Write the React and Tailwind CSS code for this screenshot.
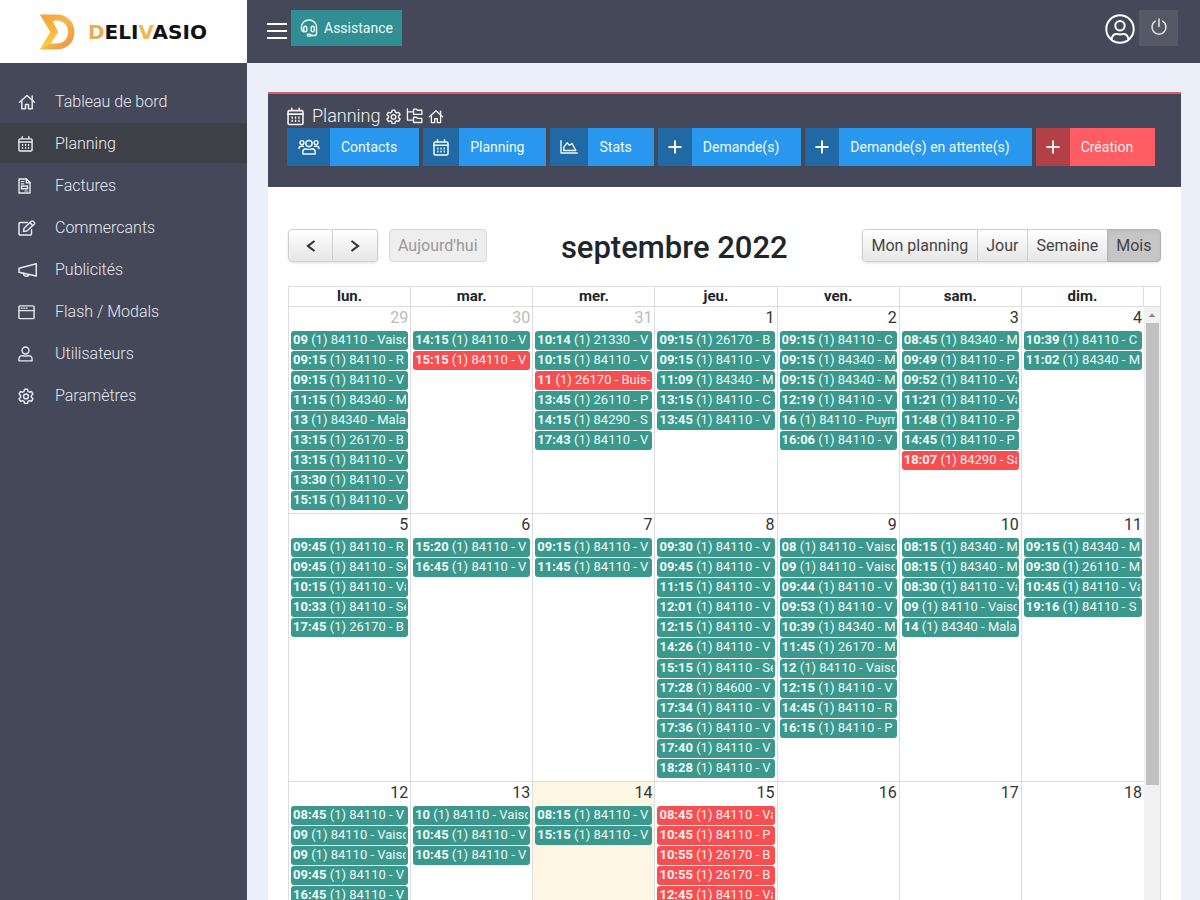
import React from "react";

function Icon({ box, className, width = 1.5, children }) {
  return (
    <svg
      viewBox={box}
      className={className}
      fill="none"
      stroke="currentColor"
      strokeWidth={width}
      strokeLinecap="round"
      strokeLinejoin="round"
      aria-hidden="true"
    >
      {children}
    </svg>
  );
}

const HomeIcon = ({ className }) => (
  <Icon box="0 0 18 16" className={className}>
    <path d="M1.500 8.300L9 1.500L16.500 8.300" />
    <path d="M3.800 7v7.800h3.700v-4.300h3v4.300h3.700V7" />
    <path d="M14.200 2v3.500" />
  </Icon>
);

const CalendarIcon = ({ className }) => (
  <Icon box="0 0 16 17" className={className}>
    <rect x="1" y="3" width="14" height="13" rx="1.200" />
    <path d="M1 6.300h14" />
    <path d="M4.500 0.800v2M11.500 0.800v2" />
    <path d="M4.200 9.500h1.300M7.400 9.500h1.300M10.600 9.500h1.300M4.200 12.600h1.300M7.400 12.600h1.300M10.600 12.600h1.300" strokeWidth="2" strokeLinecap="butt" />
  </Icon>
);

const InvoiceIcon = ({ className }) => (
  <Icon box="0 0 13 16" className={className} width={1.4}>
    <path d="M1 1h7.500L12 4.500V15H1z" />
    <path d="M8.300 1v3.700H12" />
    <path d="M3.200 3.500h2.600M3.200 5.800h2.600" strokeWidth="1.200" />
    <rect x="3.500" y="8" width="6" height="2.800" />
    <path d="M7 13h2.500" strokeWidth="1.200" />
  </Icon>
);

const EditIcon = ({ className }) => (
  <Icon box="0 0 18 16" className={className}>
    <path d="M9.500 2.500H2.200A1.200 1.200 0 0 0 1 3.700v10.100A1.200 1.200 0 0 0 2.200 15h10.100a1.200 1.200 0 0 0 1.200-1.200V9.800" />
    <path d="M5.500 11.500l0.500-3.200L13.300 1.300a1.300 1.300 0 0 1 1.900 0l1 1a1.300 1.300 0 0 1 0 1.900L8.800 11z" />
    <path d="M12 2.800L14.700 5.500" />
  </Icon>
);

const BullhornIcon = ({ className }) => (
  <Icon box="0 0 20 16" className={className}>
    <path d="M1 6.200v4L18.300 14V1.800z" />
    <path d="M5.500 11.300c0 3.600 5 3.600 5.500 1.200" />
  </Icon>
);

const WindowIcon = ({ className }) => (
  <Icon box="0 0 18 16" className={className}>
    <rect x="1" y="1.500" width="16" height="13.500" rx="1" />
    <path d="M1 6.500h16" />
    <path d="M3.300 4h1M6 4h1M8.700 4h1" strokeWidth="1.300" />
  </Icon>
);

const UserIcon = ({ className }) => (
  <Icon box="0 0 16 17" className={className}>
    <circle cx="8" cy="4.800" r="3.700" />
    <path d="M1 15.800v-1.600c0-2.400 1.700-4 4-4c1.800 0.700 4.200 0.700 6 0c2.300 0 4 1.600 4 4v1.600z" />
  </Icon>
);

const CogIcon = ({ className }) => (
  <Icon box="0 0 24 24" className={className} width={2.2}>
    <path d="M9.800 1.800h4.400l0.700 3.200l2.300 1.300l3.100-1l2.200 3.800l-2.400 2.200v2.600l2.400 2.200l-2.200 3.800l-3.100-1l-2.300 1.300l-0.700 3.200H9.800l-0.700-3.200l-2.300-1.300l-3.100 1l-2.200-3.800l2.400-2.200v-2.600L1.500 9.100l2.200-3.800l3.100 1l2.300-1.300z" />
    <circle cx="12" cy="12.600" r="3.600" />
  </Icon>
);

const FolderTreeIcon = ({ className }) => (
  <Icon box="0 0 18 17" className={className} width={1.4}>
    <path d="M1.500 0.800v12h6M1.500 4.200h6" />
    <path d="M8 1.200h3l1 1.200h4.800v4.400H8zM8 9.800h3l1 1.200h4.800v4.400H8z" />
  </Icon>
);

const UsersIcon = ({ className }) => (
  <Icon box="0 0 22 16" className={className} width={1.4}>
    <circle cx="4" cy="3.600" r="2" />
    <circle cx="18" cy="3.600" r="2" />
    <circle cx="11" cy="4.600" r="3.100" />
    <path d="M4.800 15v-2c0-2 1.500-3.200 3.400-3.200c1.600 0.700 4 0.700 5.600 0c1.900 0 3.400 1.200 3.400 3.200v2z" />
    <path d="M1 9.500c0-1.400 1-2.200 2.300-2.200h2.200M21 9.500c0-1.400-1-2.200-2.300-2.200h-2.200" />
  </Icon>
);

const ChartIcon = ({ className }) => (
  <Icon box="0 0 18 14" className={className} width={1.4}>
    <path d="M1 0.800V13h16.200" />
    <path d="M3.700 10.500V7.300l3.300-4.500l2.500 2.500l2.500-1.800l3.800 7z" />
  </Icon>
);

const PlusIcon = ({ className }) => (
  <Icon box="0 0 14 14" className={className} width={2}>
    <path d="M7 1.200v11.600M1.200 7h11.600" />
  </Icon>
);

const HeadsetIcon = ({ className }) => (
  <Icon box="0 0 18 18" className={className} width={1.4}>
    <path d="M1.500 9.500V8.200a7.500 7.200 0 0 1 15 0v6.300a2 2 0 0 1-2 2h-4" />
    <rect x="3.800" y="7.300" width="3" height="5.500" rx="1.400" />
    <rect x="11.200" y="7.300" width="3" height="5.500" rx="1.400" />
    <path d="M1.500 9.500c0 1.500 0.800 3 2.300 3.300" />
    <rect x="7.300" y="15.200" width="3.500" height="1.900" rx="0.900" />
  </Icon>
);

const UserCircleIcon = ({ className }) => (
  <Icon box="0 0 30 30" className={className} width={2}>
    <circle cx="15" cy="15" r="13.700" />
    <circle cx="15" cy="11.800" r="4.700" />
    <path d="M6.500 25.200c0.500-3.500 3-5.700 5.700-5.200c1.900 0.600 3.700 0.600 5.600 0c2.700-0.500 5.200 1.700 5.700 5.200" />
  </Icon>
);

const PowerIcon = ({ className }) => (
  <Icon box="0 0 18 18" className={className} width={1.5}>
    <path d="M5.300 3.200a7 7 0 1 0 7.400 0" />
    <path d="M9 1v7.500" />
  </Icon>
);

const NAV = [
  ["Tableau de bord", HomeIcon, "h-4 w-[18px]"],
  ["Planning", CalendarIcon, "h-4 w-[15px]", true],
  ["Factures", InvoiceIcon, "h-4 w-[13px]"],
  ["Commercants", EditIcon, "h-4 w-[18px]"],
  ["Publicités", BullhornIcon, "h-4 w-5"],
  ["Flash / Modals", WindowIcon, "h-4 w-[17px]"],
  ["Utilisateurs", UserIcon, "h-4 w-[15px]"],
  ["Paramètres", CogIcon, "size-4"],
];

const ACTIONS = [
  ["Contacts", UsersIcon, "w-[43px]", "h-4 w-[22px]"],
  ["Planning", CalendarIcon, "w-9", "h-[17px] w-4"],
  ["Stats", ChartIcon, "w-[38px]", "h-3.5 w-[18px]"],
  ["Demande(s)", PlusIcon, "w-[34px]", "size-3.5"],
  ["Demande(s) en attente(s)", PlusIcon, "w-[34px]", "size-3.5"],
];

const VAI = "84110 - Vaiso";
const VA = "84110 - Va";
const V = "84110 - V";
const M = "84340 - M";
const MALA = "84340 - Mala";
const R = "84110 - R";
const S = "84110 - S";
const SE = "84110 - Sé";
const B = "26170 - B";
const P = "84110 - P";
const C = "84110 - C";

const WEEKS = [
  {
    size: "h-[207px]",
    rows: "grid-rows-[repeat(9,minmax(0,1fr))]",
    days: [
      { n: 29, out: true, ev: [["09", VAI], ["09:15", R], ["09:15", V], ["11:15", M], ["13", MALA], ["13:15", B], ["13:15", V], ["13:30", V], ["15:15", V]] },
      { n: 30, out: true, ev: [["14:15", V], ["15:15", V, 1]] },
      { n: 31, out: true, ev: [["10:14", "21330 - V"], ["10:15", V], ["11", "26170 - Buis-", 1], ["13:45", "26110 - P"], ["14:15", "84290 - S"], ["17:43", V]] },
      { n: 1, ev: [["09:15", B], ["09:15", V], ["11:09", M], ["13:15", C], ["13:45", V]] },
      { n: 2, ev: [["09:15", C], ["09:15", M], ["09:15", M], ["12:19", V], ["16", "84110 - Puym"], ["16:06", V]] },
      { n: 3, ev: [["08:45", M], ["09:49", P], ["09:52", VA], ["11:21", VA], ["11:48", P], ["14:45", P], ["18:07", "84290 - Sa", 1]] },
      { n: 4, ev: [["10:39", C], ["11:02", M]] },
    ],
  },
  {
    size: "h-[268px]",
    rows: "grid-rows-[repeat(12,minmax(0,1fr))]",
    days: [
      { n: 5, ev: [["09:45", R], ["09:45", SE], ["10:15", VA], ["10:33", SE], ["17:45", B]] },
      { n: 6, ev: [["15:20", V], ["16:45", V]] },
      { n: 7, ev: [["09:15", V], ["11:45", V]] },
      { n: 8, ev: [["09:30", V], ["09:45", V], ["11:15", V], ["12:01", V], ["12:15", V], ["14:26", V], ["15:15", SE], ["17:28", "84600 - V"], ["17:34", V], ["17:36", V], ["17:40", V], ["18:28", V]] },
      { n: 9, ev: [["08", VAI], ["09", VAI], ["09:44", V], ["09:53", V], ["10:39", M], ["11:45", "26170 - M"], ["12", VAI], ["12:15", V], ["14:45", R], ["16:15", P]] },
      { n: 10, ev: [["08:15", M], ["08:15", M], ["08:30", VA], ["09", VAI], ["14", MALA]] },
      { n: 11, ev: [["09:15", M], ["09:30", "26110 - M"], ["10:45", VA], ["19:16", S]] },
    ],
  },
  {
    size: "h-[268px]",
    rows: "grid-rows-[repeat(12,minmax(0,1fr))]",
    days: [
      { n: 12, ev: [["08:45", V], ["09", VAI], ["09", VAI], ["09:45", V], ["16:45", V]] },
      { n: 13, ev: [["10", VAI], ["10:45", V], ["10:45", V]] },
      { n: 14, today: true, ev: [["08:15", V], ["15:15", V]] },
      { n: 15, ev: [["08:45", VA, 1], ["10:45", P, 1], ["10:55", B, 1], ["10:55", B, 1], ["12:45", VA, 1]] },
      { n: 16, ev: [] },
      { n: 17, ev: [] },
      { n: 18, ev: [] },
    ],
  },
];

function Logo() {
  return (
    <a href="#" className="flex h-[63px] items-center gap-3 bg-white pl-[38px]" aria-label="Delivasio">
      <svg viewBox="0 0 38 38" className="size-[38px]" aria-hidden="true">
        <defs>
          <linearGradient id="mark" x1="0" y1="0" x2="1" y2="1">
            <stop offset="0" stopColor="#f0a04b" />
            <stop offset="0.5" stopColor="#f6b84a" />
            <stop offset="1" stopColor="#ee8a45" />
          </linearGradient>
          <linearGradient id="inner" x1="0" y1="0" x2="0" y2="1">
            <stop offset="0" stopColor="#f3a23c" />
            <stop offset="1" stopColor="#fbd33f" />
          </linearGradient>
        </defs>
        <path d="M2 1.500H18C29.500 1.500 36.500 9 36.500 19S29.500 36.500 18 36.500H2L12.500 19ZM14.500 8L20 19L12.500 30.500H18C25.500 30.500 30 26 30 19S25.500 7.500 18 7.500Z" fill="url(#mark)" fillRule="evenodd" />
        <path d="M2 1.500L14.500 8L20 19L12.500 30.500L2 36.500L12.500 19Z" fill="url(#inner)" />
      </svg>
      <span className="font-['DejaVu_Sans',sans-serif] text-[20px] leading-none font-bold text-[#111]">
        <span className="text-[#e9ad55]">D</span>ELI<span className="text-[#efb75a]">V</span>ASIO
      </span>
    </a>
  );
}

function Sidebar() {
  return (
    <aside className="flex w-[247px] shrink-0 flex-col bg-[#444859]">
      <Logo />
      <nav className="flex flex-col gap-0.5 pt-[18px]">
        {NAV.map(([label, Glyph, size, active]) => (
          <a
            key={label}
            href="#"
            className={
              active
                ? "flex h-10 items-center bg-[#3d4047] pt-0.5 pl-[18px] text-base font-light text-[#eceef2]"
                : "flex h-10 items-center pt-0.5 pl-[18px] text-base font-light text-[#e6e8ee]"
            }
          >
            <span className="flex w-[37px]"><Glyph className={size} /></span>
            {label}
          </a>
        ))}
      </nav>
    </aside>
  );
}

function Topbar() {
  return (
    <header className="flex h-[63px] shrink-0 items-start bg-[#444859] pt-2.5 pr-[22px] pl-5">
      <button type="button" aria-label="Menu" className="mr-1 flex h-[42px] w-5 flex-col justify-center gap-[5px]">
        <span className="h-0.5 w-full bg-white" />
        <span className="h-0.5 w-full bg-white" />
        <span className="h-0.5 w-full bg-white" />
      </button>
      <button type="button" className="flex h-9 items-center gap-1.5 bg-[#318e93] px-[9px] text-sm text-[#eefcfc]">
        <HeadsetIcon className="size-[18px]" />
        Assistance
      </button>
      <div className="ml-auto flex items-start gap-1">
        <button type="button" aria-label="Profil" className="flex h-[38px] items-center text-white">
          <UserCircleIcon className="size-[30px]" />
        </button>
        <button type="button" aria-label="Déconnexion" className="flex h-9 w-[39px] items-center justify-center bg-[#565866] pb-0.5 text-[#e6e6ea]">
          <PowerIcon className="size-[18px]" />
        </button>
      </div>
    </header>
  );
}

function PanelHeader() {
  return (
    <div className="h-[95px] shrink-0 border-t-2 border-[#d4616d] bg-[#444859] px-[19px] pt-2.5">
      <h1 className="flex h-6 items-center gap-[5px] text-lg font-light text-[#f6f4f1]">
        <span className="flex items-center gap-2">
          <CalendarIcon className="h-[19px] w-[17px]" />
          Planning
        </span>
        <a href="#" aria-label="Réglages"><CogIcon className="size-[15px]" /></a>
        <a href="#" aria-label="Arborescence"><FolderTreeIcon className="h-4 w-[17px]" /></a>
        <a href="#" aria-label="Accueil"><HomeIcon className="h-[15px] w-4" /></a>
      </h1>
      <div className="flex gap-1 text-sm whitespace-nowrap">
        {ACTIONS.map(([label, Glyph, w, size]) => (
          <button key={label} type="button" className="flex h-[38px] items-stretch bg-[#2a97ef] text-[#f0faff]">
            <span className={`flex items-center justify-center bg-[#2069a5] ${w}`}><Glyph className={size} /></span>
            <span className="flex items-center pr-[22px] pl-[11px]">{label}</span>
          </button>
        ))}
        <button type="button" className="flex h-[38px] items-stretch bg-[#ff5c63] text-[#fff0ee]">
          <span className="flex w-[34px] items-center justify-center bg-[#b24147]"><PlusIcon className="size-3.5" /></span>
          <span className="flex items-center pr-[22px] pl-[11px]">Création</span>
        </button>
      </div>
    </div>
  );
}

function Toolbar() {
  const base = "flex h-[33px] items-center justify-center border-[#d0d0d0] bg-linear-to-b from-white to-[#e6e6e6] text-[#444]";
  return (
    <div className="flex h-9 shrink-0 items-start justify-between text-base">
      <div className="flex items-center gap-[11px]">
        <div className="flex rounded shadow-sm">
          <button type="button" aria-label="Précédent" className={`${base} w-[45px] rounded-l border`}>
            <svg viewBox="0 0 10 12" className="h-3 w-2.5" fill="none" stroke="#333" strokeWidth="2.2"><path d="M8.500 1L2 6l6.500 5" /></svg>
          </button>
          <button type="button" aria-label="Suivant" className={`${base} w-[45px] rounded-r border border-l-0`}>
            <svg viewBox="0 0 10 12" className="h-3 w-2.5" fill="none" stroke="#333" strokeWidth="2.2"><path d="M1.500 1L8 6l-6.500 5" /></svg>
          </button>
        </div>
        <button type="button" disabled className="h-[33px] rounded border border-[#d9d9d9] bg-[#eeeeee] px-2 text-[#999]">Aujourd'hui</button>
      </div>
      <h2 className="text-[31px] leading-[38px] font-medium text-[#212529]">septembre 2022</h2>
      <div className="flex w-[299px] rounded whitespace-nowrap shadow-sm">
        <button type="button" className={`${base} flex-auto rounded-l border`}>Mon planning</button>
        <button type="button" className={`${base} flex-auto border-y border-r`}>Jour</button>
        <button type="button" className={`${base} flex-auto border-y`}>Semaine</button>
        <button type="button" className="h-[33px] flex-auto rounded-r border border-[#b3b3b3] bg-[#c6c6c6] text-[#444] shadow-inner">Mois</button>
      </div>
    </div>
  );
}

function Day({ day, rows }) {
  return (
    <div className={day.today ? "flex min-w-0 flex-col border-r border-[#ddd] bg-[#fcf6e2]" : "flex min-w-0 flex-col border-r border-[#ddd] last:border-r-0"}>
      <div className={day.out ? "h-6 pr-0.5 text-right text-base leading-[22px] text-[#bbb]" : "h-6 pr-0.5 text-right text-base leading-[22px] text-[#333]"}>{day.n}</div>
      <ul className={`grid min-h-0 flex-1 px-0.5 pb-0.5 ${rows}`}>
        {day.ev.map(([time, text, red], i) => (
          <li key={i} className="min-w-0 pb-px">
            <a
              href="#"
              className={
                red
                  ? "block h-full rounded-[3px] bg-[#f64f52] px-0.5 text-[#ffeceb]"
                  : "block h-full rounded-[3px] bg-[#3a988c] px-0.5 text-[#eefaf7]"
              }
            >
              <span className="block overflow-hidden text-[13px] leading-[18px] whitespace-nowrap">
                <b className="font-bold">{time}</b> (1) {text}
              </span>
            </a>
          </li>
        ))}
      </ul>
    </div>
  );
}

function Calendar() {
  return (
    <div className="mt-[21px] flex min-h-0 flex-1 flex-col border-x border-t border-[#ddd]">
      <div className="flex h-[19px] shrink-0 text-center text-[15px] leading-[19px] font-bold text-[#212529]">
        <div className="grid flex-1 grid-cols-7">
          {["lun.", "mar.", "mer.", "jeu.", "ven.", "sam.", "dim."].map((d) => (
            <div key={d} className="border-r border-[#ddd]">{d}</div>
          ))}
        </div>
        <div className="w-4" />
      </div>
      <div className="flex min-h-0 flex-1 border-t border-[#ddd]">
        <div className="min-w-0 flex-1 overflow-hidden">
          {WEEKS.map((w, i) => (
            <div key={i} className={`grid grid-cols-7 border-b border-[#ddd] ${w.size}`}>
              {w.days.map((d) => <Day key={d.n} day={d} rows={w.rows} />)}
            </div>
          ))}
        </div>
        <div className="flex w-4 flex-col items-center bg-[#f1f1f1]" aria-hidden="true">
          <svg viewBox="0 0 16 16" className="size-4"><path d="M4.500 10L8 6.500l3.500 3.500z" fill="#8a8a8a" /></svg>
          <span className="h-[462px] w-[13px] bg-[#c1c1c1]" />
        </div>
      </div>
    </div>
  );
}

export default function App() {
  return (
    <div className="flex h-screen overflow-hidden bg-[#ebeff9] font-[Roboto,sans-serif] leading-normal">
      <Sidebar />
      <div className="flex min-w-0 flex-1 flex-col">
        <Topbar />
        <main className="flex min-h-0 flex-1 flex-col pt-[29px] pr-[19px] pl-[21px]">
          <section className="flex min-h-0 flex-1 flex-col bg-white">
            <PanelHeader />
            <div className="flex min-h-0 flex-1 flex-col px-5 pt-[42px]">
              <Toolbar />
              <Calendar />
            </div>
          </section>
        </main>
      </div>
    </div>
  );
}
